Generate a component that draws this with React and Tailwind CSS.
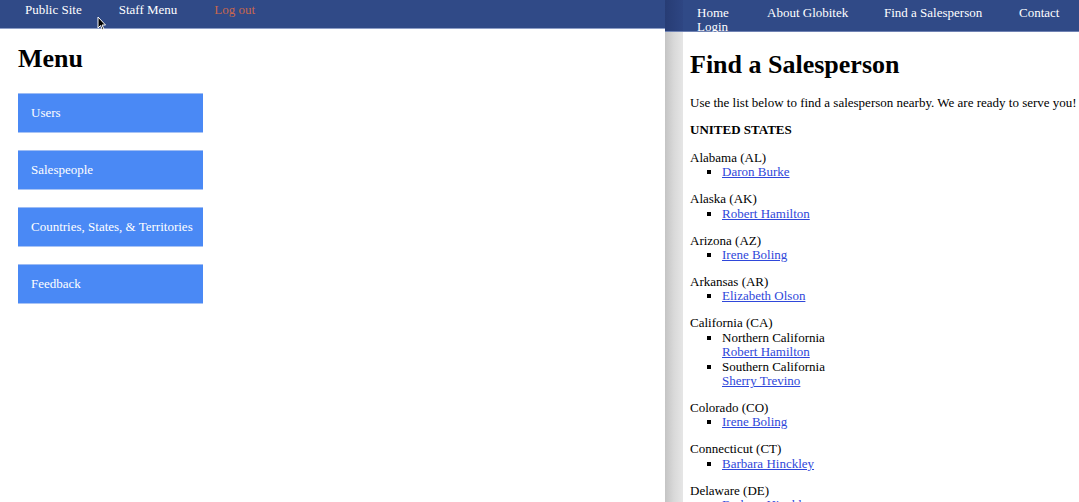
import React from "react";

const states = [
  { name: "Alabama (AL)", people: [{ name: "Daron Burke" }] },
  { name: "Alaska (AK)", people: [{ name: "Robert Hamilton" }] },
  { name: "Arizona (AZ)", people: [{ name: "Irene Boling" }] },
  { name: "Arkansas (AR)", people: [{ name: "Elizabeth Olson" }] },
  {
    name: "California (CA)",
    people: [
      { region: "Northern California", name: "Robert Hamilton" },
      { region: "Southern California", name: "Sherry Trevino" },
    ],
  },
  { name: "Colorado (CO)", people: [{ name: "Irene Boling" }] },
  { name: "Connecticut (CT)", people: [{ name: "Barbara Hinckley" }] },
  { name: "Delaware (DE)", people: [{ name: "Barbara Hinckley" }] },
];

const menuItems = ["Users", "Salespeople", "Countries, States, & Territories", "Feedback"];

const App = () => {
  return (
    <div className="relative flex w-[1079px] h-[502px] overflow-hidden bg-white font-['Liberation_Serif',serif] text-[13px] text-black">
      {/* staff side */}
      <div className="w-[665px] shrink-0">
        <nav className="h-[29px] bg-[#304a87] border-b border-[#8d9ec6] flex items-start pt-[2px] pl-[25px] gap-[37px] leading-[16px] whitespace-nowrap">
          <a className="text-white">Public Site</a>
          <a className="text-white">Staff Menu</a>
          <a className="text-[#c9674e]">Log out</a>
        </nav>
        <div className="px-[18px]">
          <h1 className="text-[26px] font-bold leading-[30px] mt-[15px] mb-[19px]">Menu</h1>
          <div className="flex flex-col gap-[17px]">
            {menuItems.map((item) => (
              <a
                key={item}
                className="w-[185px] h-[40px] bg-[#4a89f5] border-t border-[#9dbcf4] border-b border-b-[#a9c4f5] text-white flex items-center pl-[13px]"
              >
                {item}
              </a>
            ))}
          </div>
        </div>
      </div>

      {/* public side */}
      <div className="flex-1 flex flex-col">
        <div className="h-[32px] bg-[#304a87] border-b border-[#6f82b3] flex shrink-0">
          <div className="w-[18px] h-full bg-gradient-to-r from-[#273c74] to-[#2e4683]" />
          <div className="flex-1 pl-[14px] leading-[14px] text-white pt-[6px] whitespace-nowrap">
            <div className="flex">
              <span className="w-[70px]">Home</span>
              <span className="w-[117px]">About Globitek</span>
              <span className="w-[135px]">Find a Salesperson</span>
              <span>Contact</span>
            </div>
            <div>Login</div>
          </div>
        </div>
        <div className="flex flex-1 min-h-0">
          <div className="w-[18px] shrink-0 bg-gradient-to-r from-[#c4c4c4] via-[#d9d9d9] to-[#e6e6e6]" />
          <div className="pl-[7px] leading-[14.4px]">
            <h1 className="text-[26px] font-bold leading-[30px] mt-[18px] mb-[16px]">Find a Salesperson</h1>
            <p className="mb-[13px]">Use the list below to find a salesperson nearby. We are ready to serve you!</p>
            <p className="font-bold mb-[13px]">UNITED STATES</p>
            {states.map((s) => (
              <div key={s.name} className="mb-[12.6px]">
                <div>{s.name}</div>
                <ul className="list-[square] pl-[32px]">
                  {s.people.map((p, i) => (
                    <li key={i}>
                      {p.region && <div>{p.region}</div>}
                      <a className="text-[#2f47da] underline">{p.name}</a>
                    </li>
                  ))}
                </ul>
              </div>
            ))}
          </div>
        </div>
      </div>

      {/* mouse pointer */}
      <svg className="absolute left-[97px] top-[16px]" width="10" height="15" viewBox="0 0 10 15">
        <path d="M1 1 L1 12 L3.5 9.5 L5.5 14 L7 13.3 L5 9 L8.5 9 Z" fill="#000" stroke="#fff" strokeWidth="1" />
      </svg>
    </div>
  );
};

export default App;
